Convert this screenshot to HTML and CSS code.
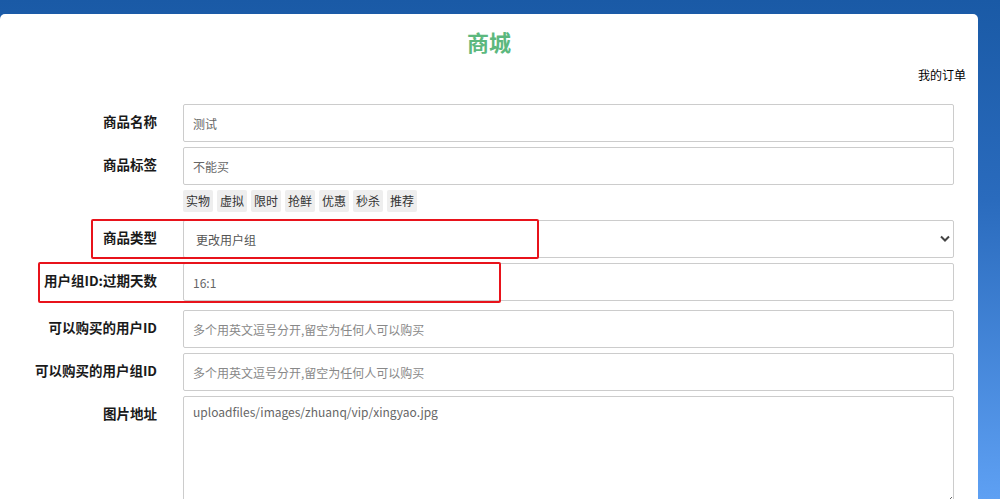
FILE: index.html
```html
<!DOCTYPE html>
<html lang="zh-CN">

<head>
    <meta charset="UTF-8">
    <meta name="viewport" content="width=device-width, initial-scale=1.0">
    <title>商城</title>
    <link rel="stylesheet" href="styles.css">
</head>

<body>
    <div class="card">
        <h1 class="title">商城</h1>
        <div class="top-links"><a href="#">我的订单</a></div>

        <form class="goods-form">
            <div class="form-row">
                <label for="name">商品名称</label>
                <input type="text" id="name" value="测试">
            </div>
            <div class="form-row">
                <label for="tag">商品标签</label>
                <input type="text" id="tag" value="不能买">
            </div>
            <div class="tag-row">
                <span class="tag">实物</span>
                <span class="tag">虚拟</span>
                <span class="tag">限时</span>
                <span class="tag">抢鲜</span>
                <span class="tag">优惠</span>
                <span class="tag">秒杀</span>
                <span class="tag">推荐</span>
            </div>
            <div class="form-row">
                <label for="type">商品类型</label>
                <div class="select-wrap">
                    <select id="type">
                        <option>更改用户组</option>
                    </select>
                    <svg class="chevron" width="10" height="8" viewBox="0 0 10 8">
                        <path d="M1 1.5 L5 5.5 L9 1.5" fill="none" stroke="#444" stroke-width="2"/>
                    </svg>
                </div>
            </div>
            <div class="form-row row-gap">
                <label for="group">用户组ID:过期天数</label>
                <input type="text" id="group" value="16:1">
            </div>
            <div class="form-row">
                <label for="uids">可以购买的用户ID</label>
                <input type="text" id="uids" placeholder="多个用英文逗号分开,留空为任何人可以购买">
            </div>
            <div class="form-row">
                <label for="gids">可以购买的用户组ID</label>
                <input type="text" id="gids" placeholder="多个用英文逗号分开,留空为任何人可以购买">
            </div>
            <div class="form-row">
                <label for="pic">图片地址</label>
                <textarea id="pic">uploadfiles/images/zhuanq/vip/xingyao.jpg</textarea>
            </div>
        </form>

        <div class="mark mark-type"></div>
        <div class="mark mark-group"></div>
    </div>
</body>

</html>
```

FILE: styles.css
```css
html,
body {
    margin: 0;
    height: 100%;
    overflow: hidden;
}

body {
    font-family: "Noto Sans CJK SC", "Microsoft YaHei", sans-serif;
    background: linear-gradient(to bottom, #1a5aa6 0%, #2a6bbd 40%, #5ea0f3 100%);
    padding-top: 14px;
    box-sizing: border-box;
}

.card {
    position: relative;
    width: 978px;
    background-color: #fff;
    border-radius: 5px;
    padding: 12px 0 40px 0;
    box-sizing: border-box;
}

.title {
    margin: 0;
    text-align: center;
    font-size: 22px;
    line-height: 30px;
    font-weight: bold;
    color: #5cb87e;
}

.top-links {
    margin-top: 10px;
    text-align: right;
    font-size: 12px;
    line-height: 18px;
    padding-right: 12px;
}

.top-links a {
    color: #000;
    text-decoration: none;
}

.goods-form {
    margin-top: 20px;
    padding-right: 24px;
}

.form-row {
    display: flex;
    align-items: flex-start;
    margin-bottom: 5px;
}

.row-gap {
    margin-bottom: 9px;
}

.form-row label {
    width: 157px;
    flex-shrink: 0;
    margin-right: 26px;
    padding-top: 7px;
    text-align: right;
    font-size: 13.5px;
    line-height: 20px;
    font-weight: bold;
    color: #1a1a1a;
    white-space: nowrap;
}

input,
select,
textarea {
    flex: 1;
    height: 38px;
    box-sizing: border-box;
    border: 1px solid #ccc;
    border-radius: 2px;
    padding: 0 9px;
    font-family: inherit;
    font-size: 12px;
    color: #666;
    background: #fff;
    outline: none;
}

input::placeholder {
    color: #888;
}

.select-wrap {
    position: relative;
    flex: 1;
    display: flex;
}

select {
    appearance: none;
    -webkit-appearance: none;
    padding-left: 12px;
    color: #555;
}

.chevron {
    position: absolute;
    right: 4px;
    top: 15px;
}

textarea {
    height: 110px;
    padding: 4px 9px;
    line-height: 22px;
    font-size: 12px;
    resize: vertical;
}

.tag-row {
    display: flex;
    gap: 4px;
    margin: 3px 0 8px 183px;
}

.tag {
    width: 30px;
    height: 22px;
    line-height: 22px;
    text-align: center;
    font-size: 12px;
    color: #333;
    background-color: #eee;
    border-radius: 2px;
}

.mark {
    position: absolute;
    border: 2px solid #e8131b;
    border-radius: 2px;
    box-sizing: border-box;
}

.mark-type {
    left: 91px;
    top: 205px;
    width: 448px;
    height: 40px;
}

.mark-group {
    left: 38px;
    top: 248px;
    width: 463px;
    height: 41px;
}
```
